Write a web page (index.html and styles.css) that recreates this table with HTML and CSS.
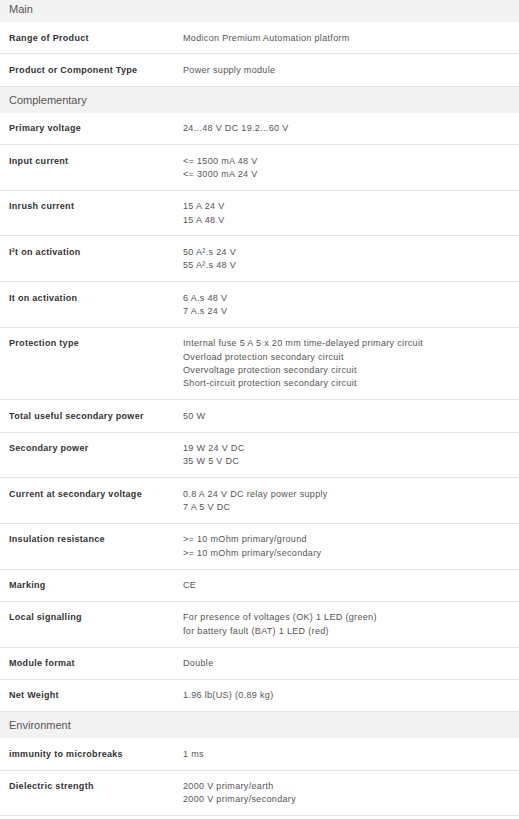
FILE: index.html
```html
<!DOCTYPE html>
<html>
<head>
<meta charset="utf-8">
<link rel="stylesheet" href="styles.css">
</head>
<body>
<div class="specs">
  <div class="section">Main</div>
  <div class="row"><div class="label">Range of Product</div><div class="value">Modicon Premium Automation platform</div></div>
  <div class="row"><div class="label">Product or Component Type</div><div class="value">Power supply module</div></div>
  <div class="section">Complementary</div>
  <div class="row"><div class="label">Primary voltage</div><div class="value">24...48 V DC 19.2...60 V</div></div>
  <div class="row"><div class="label">Input current</div><div class="value">&lt;= 1500 mA 48 V<br>&lt;= 3000 mA 24 V</div></div>
  <div class="row"><div class="label">Inrush current</div><div class="value">15 A 24 V<br>15 A 48 V</div></div>
  <div class="row"><div class="label">I²t on activation</div><div class="value">50 A².s 24 V<br>55 A².s 48 V</div></div>
  <div class="row"><div class="label">It on activation</div><div class="value">6 A.s 48 V<br>7 A.s 24 V</div></div>
  <div class="row"><div class="label">Protection type</div><div class="value">Internal fuse 5 A 5 x 20 mm time-delayed primary circuit<br>Overload protection secondary circuit<br>Overvoltage protection secondary circuit<br>Short-circuit protection secondary circuit</div></div>
  <div class="row"><div class="label">Total useful secondary power</div><div class="value">50 W</div></div>
  <div class="row"><div class="label">Secondary power</div><div class="value">19 W 24 V DC<br>35 W 5 V DC</div></div>
  <div class="row"><div class="label">Current at secondary voltage</div><div class="value">0.8 A 24 V DC relay power supply<br>7 A 5 V DC</div></div>
  <div class="row"><div class="label">Insulation resistance</div><div class="value">&gt;= 10 mOhm primary/ground<br>&gt;= 10 mOhm primary/secondary</div></div>
  <div class="row"><div class="label">Marking</div><div class="value">CE</div></div>
  <div class="row"><div class="label">Local signalling</div><div class="value">For presence of voltages (OK) 1 LED (green)<br>for battery fault (BAT) 1 LED (red)</div></div>
  <div class="row"><div class="label">Module format</div><div class="value">Double</div></div>
  <div class="row"><div class="label">Net Weight</div><div class="value">1.96 lb(US) (0.89 kg)</div></div>
  <div class="section">Environment</div>
  <div class="row"><div class="label">immunity to microbreaks</div><div class="value">1 ms</div></div>
  <div class="row"><div class="label">Dielectric strength</div><div class="value">2000 V primary/earth<br>2000 V primary/secondary</div></div>
</div>
</body>
</html>
```

FILE: styles.css
```css
html, body {
  margin: 0;
  padding: 0;
  background: #ffffff;
}
body {
  font-family: "Liberation Sans", Arial, sans-serif;
}
.specs {
  margin-top: -4px;
  width: 519px;
}
.section {
  background: #f2f2f2;
  color: #555555;
  font-size: 11px;
  line-height: 14px;
  padding: 6px 9px;
}
.row {
  display: grid;
  grid-template-columns: 183px 1fr;
  border-bottom: 1px solid #e4e4e4;
  padding: 9.5px 0 8.5px;
}
.label {
  padding-left: 9px;
  font-size: 9px;
  line-height: 13.35px;
  font-weight: bold;
  color: #333333;
  letter-spacing: 0.3px;
}
.value {
  font-size: 9px;
  line-height: 13.35px;
  color: #555555;
  letter-spacing: 0.33px;
}
```
